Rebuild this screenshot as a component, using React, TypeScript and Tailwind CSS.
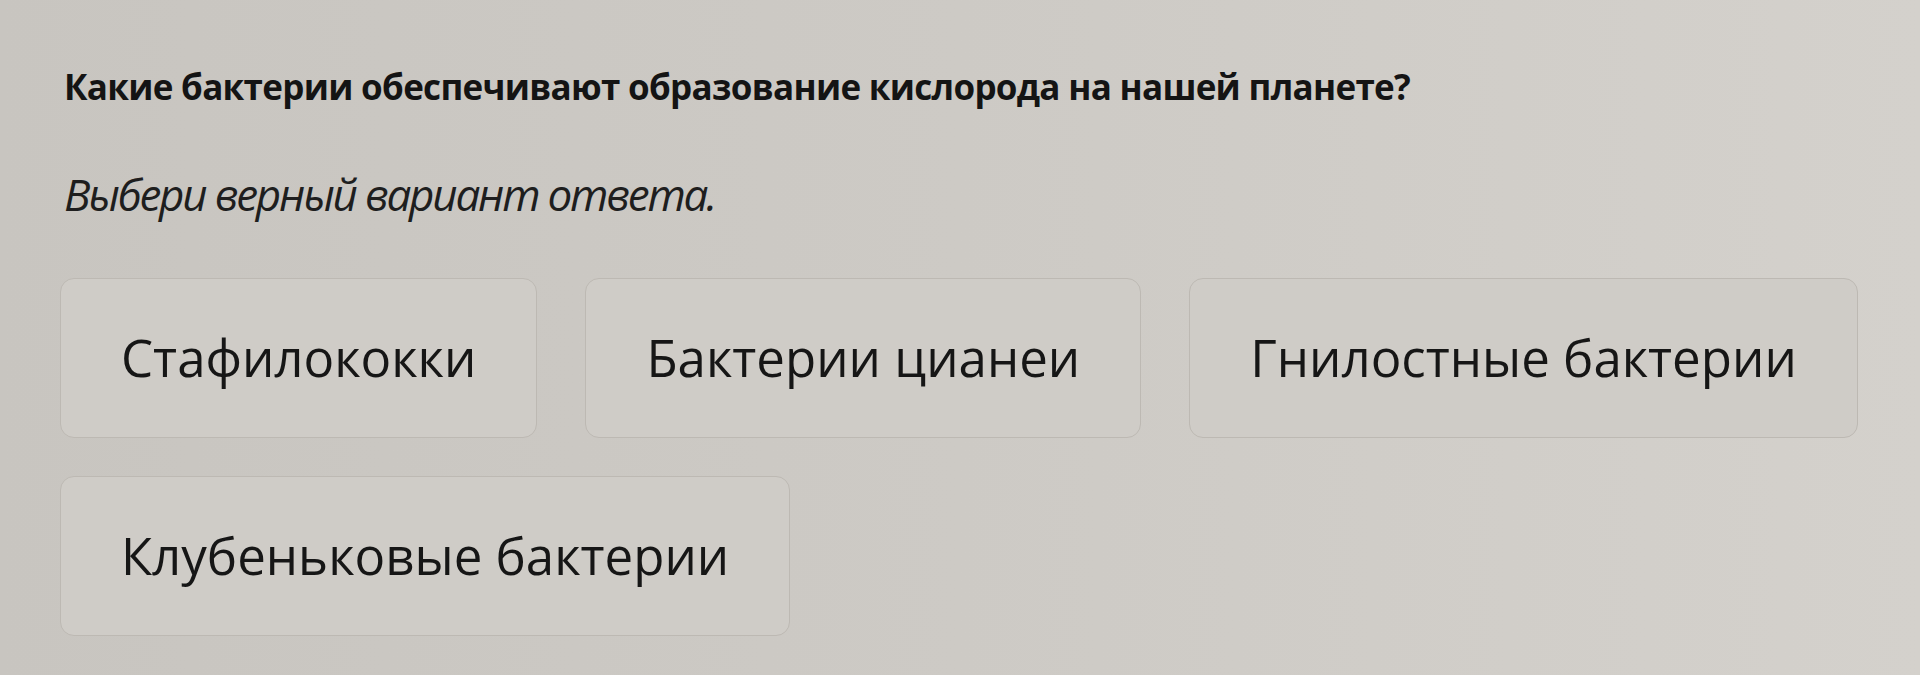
const options = [
  'Стафилококки',
  'Бактерии цианеи',
  'Гнилостные бактерии',
  'Клубеньковые бактерии',
]

function OptionCard({ label }: { label: string }) {
  return (
    <button
      type="button"
      className="flex h-[160px] items-center rounded-[14px] border border-[#bdb9b3] bg-[#cfccc7] px-[60px] text-left text-[51px] leading-[1.2] text-[#161616]"
    >
      {label}
    </button>
  )
}

export default function App() {
  return (
    <div
      className="min-h-[675px] w-full bg-gradient-to-r from-[#c8c5c0] via-[#cdcac5] to-[#d4d1cc] pl-[60px] pr-[40px] pt-[66px]"
      style={{ fontFamily: '"Open Sans", "Noto Sans", sans-serif' }}
    >
      <h1 className="pl-[4px] text-[35px] font-bold leading-[42px] tracking-[-0.02em] text-[#141414]">
        Какие бактерии обеспечивают образование кислорода на нашей планете?
      </h1>
      <p className="mt-[60px] pl-[4px] text-[44px] italic leading-[52px] tracking-[-0.05em] text-[#1e1e1e]">
        Выбери верный вариант ответа.
      </p>
      <div className="mt-[58px] flex flex-wrap gap-x-[48px] gap-y-[38px]">
        {options.map((option) => (
          <OptionCard key={option} label={option} />
        ))}
      </div>
    </div>
  )
}
